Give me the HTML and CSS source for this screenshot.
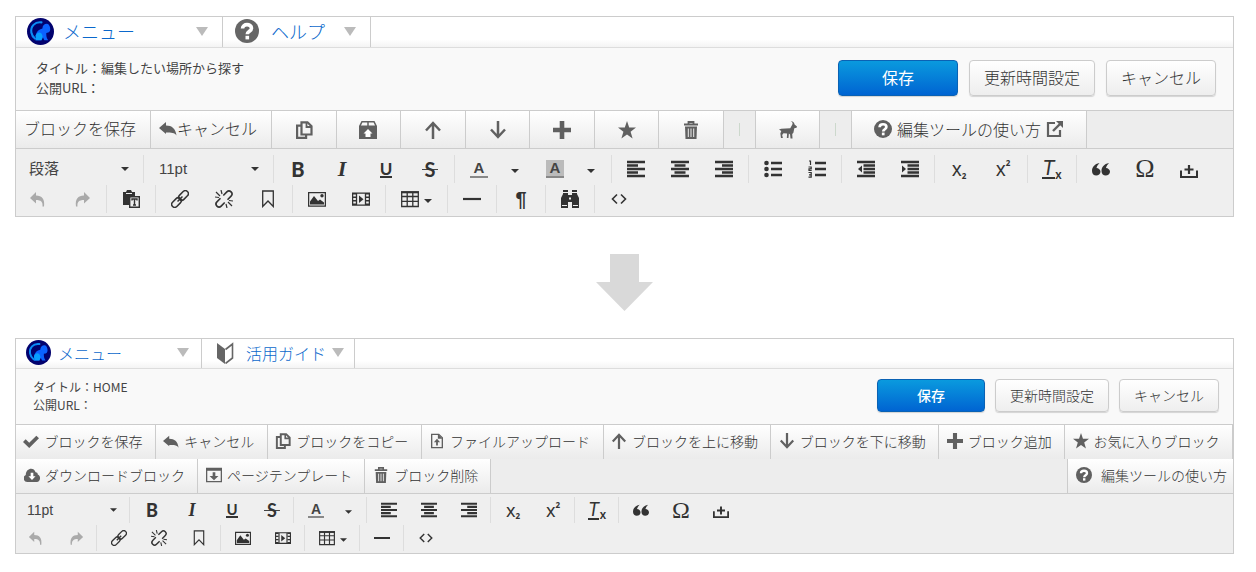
FILE: index.html
```html
<!DOCTYPE html>
<html lang="ja">
<head>
    <meta charset="UTF-8">
    <meta name="viewport" content="width=device-width, initial-scale=1.0">
    <title>編集ツール</title>
    <link rel="stylesheet" href="styles.css">
</head>
<body>

    <!-- icon sprite -->
    <svg class="sprite">
        <symbol id="logo" viewBox="0 0 28 28">
            <circle cx="14" cy="14" r="14" fill="#02026e"/>
            <path d="M15 4.500C8 3.500 3.500 9 4.500 15c.5 3 2 5 4 6.500" fill="none" stroke="#0a8cf5" stroke-width="2.200" stroke-linecap="round"/>
            <path d="M9 23c1-1 0-3 0-5 1-4 3-6 7-7 0-3 2-5 4.500-5 2 0 3 2 3.500 4 .5 3-.5 4.500-2 5l-2 .5c0 3 0 5 2 7.500h-4l-1.500-3-1.500 3z" fill="#0b62ff"/>
            <path d="M8.500 23c2-1 0-3 .5-5 1-3 4-4 6-2 2 3 1 5 0 7z" fill="#08a0ff"/>
        </symbol>
        <symbol id="help" viewBox="0 0 24 24">
            <circle cx="12" cy="12" r="12" fill="currentColor"/>
            <path d="M7.500 9.500C7.500 4.300 16.500 4.500 16.500 9.300c0 3-4.200 3-4.200 6" fill="none" stroke="#fff" stroke-width="3.600"/>
            <rect x="10.500" y="16.800" width="3.600" height="3.600" fill="#fff"/>
        </symbol>
        <symbol id="book" viewBox="0 0 18 22">
            <path d="M1 1l8 6v15l-8-6z" fill="currentColor"/>
            <path d="M9.500 7.500L16.500 2v14L9.500 21.500" fill="none" stroke="currentColor" stroke-width="1.600"/>
        </symbol>
        <symbol id="tri" viewBox="0 0 12 9"><path d="M0 0h12L6 9z" fill="currentColor"/></symbol>
        <symbol id="caret" viewBox="0 0 8 4"><path d="M0 0h8L4 4z" fill="currentColor"/></symbol>

        <symbol id="back" viewBox="0 0 18 18"><path d="M0 9l7-6v3.500c6 0 9.500 3 10.500 10-2-3-5-3-10.500-3V15z" fill="currentColor"/></symbol>
        <symbol id="copy" viewBox="0 0 18 18">
            <path d="M6.500 1.300h6L16.500 5.300v8.200h-10z" fill="none" stroke="currentColor" stroke-width="2.200"/>
            <path d="M11.500 1v5h5" fill="none" stroke="currentColor" stroke-width="1.800"/>
            <path d="M6 4.600H2.100v12.200h9V14" fill="none" stroke="currentColor" stroke-width="2.200"/>
        </symbol>
        <symbol id="box" viewBox="0 0 18 18">
            <path d="M3 .7h12l2.300 4.600H.7zM9 .7v4.600" fill="none" stroke="currentColor" stroke-width="1.500"/>
            <path d="M0 5.300h18V18H0z" fill="currentColor"/>
            <path d="M9 8l4.500 4.500h-2V16h-5v-3.500h-2z" fill="#fff"/>
        </symbol>
        <symbol id="up" viewBox="0 0 18 18"><path d="M9 18V2M2 9.500L9 2l7 7.500" fill="none" stroke="currentColor" stroke-width="2.500"/></symbol>
        <symbol id="down" viewBox="0 0 18 18"><path d="M9 0v16M2 8.500L9 16l7-7.500" fill="none" stroke="currentColor" stroke-width="2.500"/></symbol>
        <symbol id="plus" viewBox="0 0 18 18"><path d="M6.700 0h4.600v6.700H18v4.600h-6.700V18H6.700v-6.700H0V6.700h6.700z" fill="currentColor"/></symbol>
        <symbol id="star" viewBox="0 0 18 18"><path d="M9 0l2.200 6.600H18l-5.400 4.200 2 6.700L9 13.500l-5.600 4 2-6.700L0 6.600h6.800z" fill="currentColor"/></symbol>
        <symbol id="trash" viewBox="0 0 18 18">
            <path d="M2 3.500h14M6.500 3V1h5v2" fill="none" stroke="currentColor" stroke-width="1.800"/>
            <path d="M3 5.500h12l-.5 12.500h-11z" fill="currentColor"/>
            <path d="M6.300 7.500v8.500M9 7.500v8.500M11.700 7.500v8.500" stroke="#eee" stroke-width="1"/>
        </symbol>
        <symbol id="goat" viewBox="0 0 20 20">
            <path d="M0 9.500l2.500-1 10-.5 2-3.500c1-1.500 1-3-1.500-4.500 3 .3 4 2 4.300 4L20 6l-.5 1.500-2.500.5-1 5-1.300 1.500.3 5h-2.200l-.5-4.500-1.300-1L10.500 19H8.700L9 14l-4-.5-1.500 2 .8 3.500H2.200L1.500 14 2.500 11z" fill="currentColor"/>
        </symbol>
        <symbol id="external" viewBox="0 0 18 18">
            <path d="M9 3H2v13h12v-6" fill="none" stroke="currentColor" stroke-width="2.200"/>
            <path d="M7 11l8-8" stroke="currentColor" stroke-width="2.400"/>
            <path d="M10 1h7v7z" fill="currentColor"/>
        </symbol>
        <symbol id="check" viewBox="0 0 18 18"><path d="M0 10l3-3 4 4 8-8 3 3L7 17z" fill="currentColor"/></symbol>
        <symbol id="file-up" viewBox="0 0 18 18">
            <path d="M3 1.500h8L15 5.500v11H3z" fill="none" stroke="currentColor" stroke-width="1.500"/>
            <path d="M10 1v5.500h5z" fill="currentColor"/>
            <path d="M9 6.500l3.500 4H10V14H8v-3.500H5.500z" fill="currentColor"/>
        </symbol>
        <symbol id="cloud" viewBox="0 0 18 18">
            <path d="M4 17a4.200 4.200 0 0 1-2-8C2 1.500 11-.5 13 6c1.500 0 2.500 1 2.500 2.500C19.500 10 18.500 17 14.500 17z" fill="currentColor"/>
            <path d="M7.500 6.500h3v4H13l-4 4-4-4h2.500z" fill="#fff"/>
        </symbol>
        <symbol id="template" viewBox="0 0 18 18">
            <path d="M.7 1.500h16.600v15H.7z" fill="none" stroke="currentColor" stroke-width="1.500"/>
            <path d="M1 3h16" stroke="currentColor" stroke-width="2.500"/>
            <path d="M7.500 6h3v4H14l-5 5-5-5h3.500z" fill="currentColor"/>
        </symbol>

        <symbol id="left" viewBox="0 0 18 18"><path d="M0 2h18M0 5.500h11M0 9h18M0 12.500h11M0 16h18" stroke="currentColor" stroke-width="2.300"/></symbol>
        <symbol id="center" viewBox="0 0 18 18"><path d="M0 2h18M3.500 5.500h11M0 9h18M3.500 12.500h11M0 16h18" stroke="currentColor" stroke-width="2.300"/></symbol>
        <symbol id="right" viewBox="0 0 18 18"><path d="M0 2h18M7 5.500h11M0 9h18M7 12.500h11M0 16h18" stroke="currentColor" stroke-width="2.300"/></symbol>
        <symbol id="bullets" viewBox="0 0 18 18">
            <path d="M7 3h11M7 9h11M7 15h11" stroke="currentColor" stroke-width="2.300"/>
            <circle cx="2.500" cy="3" r="2.300" fill="currentColor"/><circle cx="2.500" cy="9" r="2.300" fill="currentColor"/><circle cx="2.500" cy="15" r="2.300" fill="currentColor"/>
        </symbol>
        <symbol id="numbers" viewBox="0 0 18 18">
            <path d="M7 3h11M7 9h11M7 15h11" stroke="currentColor" stroke-width="2.300"/>
            <path d="M1 1h1.500v4M.5 7h2.700v1.800H1v1.700h2.700M.5 12.500h2.700v4.700H.5M1 14.800h2" fill="none" stroke="currentColor" stroke-width="1.200"/>
        </symbol>
        <symbol id="outdent" viewBox="0 0 18 18">
            <path d="M0 2h18M6.500 5.500H18M6.500 9H18M6.500 12.500H18M0 16h18" stroke="currentColor" stroke-width="2.300"/>
            <path d="M5 5.500v7L1 9z" fill="currentColor"/>
        </symbol>
        <symbol id="indent" viewBox="0 0 18 18">
            <path d="M0 2h18M6.500 5.500H18M6.500 9H18M6.500 12.500H18M0 16h18" stroke="currentColor" stroke-width="2.300"/>
            <path d="M1 5.500v7L5 9z" fill="currentColor"/>
        </symbol>
        <symbol id="quote" viewBox="0 0 18 18">
            <path d="M7.500 3C2.500 4 0 7 0 11c0 3 2 4.500 4.200 4.500S8.500 14 8.500 11.800 6.500 8.200 4.500 8C5 6 6 4.500 7.500 3zM17 3c-5 1-7.500 4-7.500 8 0 3 2 4.500 4.200 4.500S18 14 18 11.800s-2-3.600-4-3.800c.5-2 1.500-3.500 3-5z" fill="currentColor"/>
        </symbol>
        <symbol id="insert" viewBox="0 0 18 18"><path d="M1 10.500V17h16v-6.500" fill="none" stroke="currentColor" stroke-width="2"/><path d="M9 5v9M4.500 9.500h9" stroke="currentColor" stroke-width="2.200"/></symbol>
        <symbol id="undo" viewBox="0 0 18 18"><path d="M1 8l6-6v3.500c6 0 9 3.500 8 11h-1.500C14 12 12 10 7 10v3.500z" fill="currentColor"/></symbol>
        <symbol id="redo" viewBox="0 0 18 18"><path d="M17 8l-6-6v3.500c-6 0-9 3.500-8 11h1.500C4 12 6 10 11 10v3.500z" fill="currentColor"/></symbol>
        <symbol id="paste" viewBox="0 0 18 18">
            <path d="M1 2h3l1-2h4l1 2h3v4H7v9H1z" fill="currentColor"/>
            <path d="M4 3.500h6" stroke="#eee" stroke-width="1"/>
            <path d="M7.700 6.700h9.600v10.600H7.700z" fill="#efefef" stroke="currentColor" stroke-width="1.400"/>
            <path d="M10 10.500V9h5v1.500M12.500 9v6M11 15h3" fill="none" stroke="currentColor" stroke-width="1.400"/>
        </symbol>
        <symbol id="link" viewBox="0 0 18 18">
            <g transform="rotate(-45 9 9)" fill="none" stroke="currentColor" stroke-width="1.500">
                <rect x="-1.500" y="6" width="11" height="6" rx="3"/><rect x="8.500" y="6" width="11" height="6" rx="3"/><path d="M5.500 9h7"/>
            </g>
        </symbol>
        <symbol id="unlink" viewBox="0 0 18 18">
            <g transform="rotate(-45 9 9)" fill="none" stroke="currentColor" stroke-width="1.600">
                <path d="M7 6H2a3 3 0 0 0 0 6h5M11 6h5a3 3 0 0 1 0 6h-5"/>
            </g>
            <path d="M6 0l1 4M1 2l4 4M0 7l4 .5M12 18l-1-4M17 16l-4-4M18 11l-4-.5" stroke="currentColor" stroke-width="1.200"/>
        </symbol>
        <symbol id="bookmark" viewBox="0 0 18 18"><path d="M3.700 1h10.600v15.500L9 11l-5.300 5.500z" fill="none" stroke="currentColor" stroke-width="1.300"/></symbol>
        <symbol id="image" viewBox="0 0 18 18">
            <path d="M.6 2.600h16.800v13.600H.6z" fill="none" stroke="currentColor" stroke-width="1.300"/>
            <path d="M2 14.500v-3L6 6l4 5 2-1.500 4 3v2z" fill="currentColor"/><circle cx="14" cy="5.800" r="1.700" fill="currentColor"/>
        </symbol>
        <symbol id="video" viewBox="0 0 18 18">
            <path d="M.6 3.100h16.800v12H.6zM4.500 3v12M13.500 3v12" fill="none" stroke="currentColor" stroke-width="1.300"/>
            <path d="M2.500 3v12M15.500 3v12" stroke="currentColor" stroke-width="3" stroke-dasharray="1.500 2"/>
            <path d="M7 5.500v7.500l4.500-3.700z" fill="currentColor"/>
        </symbol>
        <symbol id="table" viewBox="0 0 18 18"><path d="M.7 2h16.600v14.500H.7zM1 6.500h16M1 11.300h16M6.200 2v14M11.800 2v14" fill="none" stroke="currentColor" stroke-width="1.300"/><path d="M0 2.300h18" stroke="currentColor" stroke-width="2"/></symbol>
        <symbol id="line" viewBox="0 0 18 18"><path d="M0 9h18" stroke="currentColor" stroke-width="2.200"/></symbol>
        <symbol id="find" viewBox="0 0 18 18">
            <path d="M2 0h5v5h4V0h5v4l2 4v10h-7v-6H7v6H0V8l2-4z" fill="currentColor"/>
            <path d="M8 7.500h2v2H8z" fill="#efefef"/>
            <path d="M1 15.500h5M12 15.500h5M2 2.500h5M11 2.500h5" stroke="#efefef" stroke-width="1"/>
        </symbol>
        <symbol id="code" viewBox="0 0 18 18"><path d="M7 4.500L2.500 9 7 13.500M11 4.500L15.500 9 11 13.500" fill="none" stroke="currentColor" stroke-width="1.600"/></symbol>
    </svg>

    <section class="editor">
        <nav class="tabs">
            <button class="tab tab-menu"><svg class="logo"><use href="#logo"/></svg>メニュー<svg class="tri"><use href="#tri"/></svg></button>
            <button class="tab tab-help"><svg class="tab-icon"><use href="#help"/></svg>ヘルプ<svg class="tri"><use href="#tri"/></svg></button>
        </nav>
        <header class="info">
            <div class="info-text">
                <div>タイトル：編集したい場所から探す</div>
                <div>公開URL：</div>
            </div>
            <button class="btn btn-save">保存</button>
            <button class="btn">更新時間設定</button>
            <button class="btn">キャンセル</button>
        </header>
        <div class="blocks">
            <button class="block">ブロックを保存</button>
            <button class="block"><svg class="icon"><use href="#back"/></svg>キャンセル</button>
            <div class="block-icons">
                <button class="block" aria-label="コピー"><svg class="icon"><use href="#copy"/></svg></button>
                <button class="block" aria-label="アップロード"><svg class="icon"><use href="#box"/></svg></button>
                <button class="block" aria-label="上に移動"><svg class="icon"><use href="#up"/></svg></button>
                <button class="block" aria-label="下に移動"><svg class="icon"><use href="#down"/></svg></button>
                <button class="block" aria-label="追加"><svg class="icon"><use href="#plus"/></svg></button>
                <button class="block" aria-label="お気に入り"><svg class="icon"><use href="#star"/></svg></button>
                <button class="block" aria-label="削除"><svg class="icon"><use href="#trash"/></svg></button>
            </div>
            <div class="divider"></div>
            <button class="block block-goat" aria-label="やぎ"><svg class="icon"><use href="#goat"/></svg></button>
            <div class="divider"></div>
            <button class="block block-help"><svg class="icon"><use href="#help"/></svg>編集ツールの使い方<svg class="icon"><use href="#external"/></svg></button>
        </div>
        <div class="format">
            <div class="row">
                <div class="group">
                    <label class="pick"><select aria-label="スタイル"><option>段落</option></select><svg class="caret"><use href="#caret"/></svg></label>
                </div>
                <div class="group">
                    <label class="pick"><select aria-label="文字サイズ"><option>11pt</option></select><svg class="caret"><use href="#caret"/></svg></label>
                </div>
                <div class="group">
                    <button class="tool bold">B</button>
                    <button class="tool italic">I</button>
                    <button class="tool underline"><span>U</span></button>
                    <button class="tool strike"><s>S</s></button>
                </div>
                <div class="group">
                    <button class="tool"><span class="color">A</span></button>
                    <button class="tool drop" aria-label="文字色"><svg class="caret"><use href="#caret"/></svg></button>
                    <button class="tool"><span class="color color-back">A</span></button>
                    <button class="tool drop" aria-label="背景色"><svg class="caret"><use href="#caret"/></svg></button>
                </div>
                <div class="group">
                    <button class="tool" aria-label="左揃え"><svg class="icon"><use href="#left"/></svg></button>
                    <button class="tool" aria-label="中央揃え"><svg class="icon"><use href="#center"/></svg></button>
                    <button class="tool" aria-label="右揃え"><svg class="icon"><use href="#right"/></svg></button>
                </div>
                <div class="group">
                    <button class="tool" aria-label="箇条書き"><svg class="icon"><use href="#bullets"/></svg></button>
                    <button class="tool" aria-label="番号付き"><svg class="icon"><use href="#numbers"/></svg></button>
                </div>
                <div class="group">
                    <button class="tool" aria-label="インデント解除"><svg class="icon"><use href="#outdent"/></svg></button>
                    <button class="tool" aria-label="インデント"><svg class="icon"><use href="#indent"/></svg></button>
                </div>
                <div class="group">
                    <button class="tool script">x<small class="low">2</small></button>
                    <button class="tool script">x<small class="high">2</small></button>
                </div>
                <div class="group">
                    <button class="tool clear"><span>T</span><small>x</small></button>
                </div>
                <div class="group">
                    <button class="tool" aria-label="引用"><svg class="icon"><use href="#quote"/></svg></button>
                    <button class="tool omega">Ω</button>
                    <button class="tool" aria-label="挿入"><svg class="icon"><use href="#insert"/></svg></button>
                </div>
            </div>
            <div class="row">
                <div class="group">
                    <button class="tool" aria-label="元に戻す" disabled><svg class="icon"><use href="#undo"/></svg></button>
                    <button class="tool" aria-label="やり直し" disabled><svg class="icon"><use href="#redo"/></svg></button>
                </div>
                <div class="group">
                    <button class="tool" aria-label="貼り付け"><svg class="icon"><use href="#paste"/></svg></button>
                </div>
                <div class="group">
                    <button class="tool" aria-label="リンク"><svg class="icon"><use href="#link"/></svg></button>
                    <button class="tool" aria-label="リンク解除"><svg class="icon"><use href="#unlink"/></svg></button>
                    <button class="tool" aria-label="アンカー"><svg class="icon"><use href="#bookmark"/></svg></button>
                </div>
                <div class="group">
                    <button class="tool" aria-label="画像"><svg class="icon"><use href="#image"/></svg></button>
                    <button class="tool" aria-label="動画"><svg class="icon"><use href="#video"/></svg></button>
                </div>
                <div class="group">
                    <button class="tool table-tool" aria-label="表"><svg class="icon"><use href="#table"/></svg><svg class="caret"><use href="#caret"/></svg></button>
                </div>
                <div class="group">
                    <button class="tool" aria-label="水平線"><svg class="icon"><use href="#line"/></svg></button>
                </div>
                <div class="group">
                    <button class="tool pilcrow">¶</button>
                </div>
                <div class="group">
                    <button class="tool" aria-label="検索"><svg class="icon"><use href="#find"/></svg></button>
                </div>
                <div class="group">
                    <button class="tool" aria-label="ソースコード"><svg class="icon"><use href="#code"/></svg></button>
                </div>
            </div>
        </div>
    </section>

    <svg class="arrow" viewBox="0 0 57 57"><path d="M14 0h29v28h14L28.500 57 0 28h14z"/></svg>

    <section class="editor compact">
        <nav class="tabs">
            <button class="tab tab-menu"><svg class="logo"><use href="#logo"/></svg>メニュー<svg class="tri"><use href="#tri"/></svg></button>
            <button class="tab tab-help"><svg class="tab-icon"><use href="#book"/></svg>活用ガイド<svg class="tri"><use href="#tri"/></svg></button>
        </nav>
        <header class="info">
            <div class="info-text">
                <div>タイトル：HOME</div>
                <div>公開URL：</div>
            </div>
            <button class="btn btn-save">保存</button>
            <button class="btn">更新時間設定</button>
            <button class="btn">キャンセル</button>
        </header>
        <div class="blocks blocks-full">
            <button class="block"><svg class="icon"><use href="#check"/></svg>ブロックを保存</button>
            <button class="block"><svg class="icon"><use href="#back"/></svg>キャンセル</button>
            <button class="block"><svg class="icon"><use href="#copy"/></svg>ブロックをコピー</button>
            <button class="block"><svg class="icon"><use href="#file-up"/></svg>ファイルアップロード</button>
            <button class="block"><svg class="icon"><use href="#up"/></svg>ブロックを上に移動</button>
            <button class="block"><svg class="icon"><use href="#down"/></svg>ブロックを下に移動</button>
            <button class="block"><svg class="icon"><use href="#plus"/></svg>ブロック追加</button>
            <button class="block"><svg class="icon"><use href="#star"/></svg>お気に入りブロック</button>
        </div>
        <div class="blocks blocks-rest">
            <button class="block"><svg class="icon"><use href="#cloud"/></svg>ダウンロードブロック</button>
            <button class="block"><svg class="icon"><use href="#template"/></svg>ページテンプレート</button>
            <button class="block"><svg class="icon"><use href="#trash"/></svg>ブロック削除</button>
            <button class="block block-end"><svg class="icon"><use href="#help"/></svg>編集ツールの使い方</button>
        </div>
        <div class="format">
            <div class="row">
                <div class="group">
                    <label class="pick"><select aria-label="文字サイズ"><option>11pt</option></select><svg class="caret"><use href="#caret"/></svg></label>
                </div>
                <div class="group">
                    <button class="tool bold">B</button>
                    <button class="tool italic">I</button>
                    <button class="tool underline"><span>U</span></button>
                    <button class="tool strike"><s>S</s></button>
                </div>
                <div class="group">
                    <button class="tool"><span class="color">A</span></button>
                    <button class="tool drop" aria-label="文字色"><svg class="caret"><use href="#caret"/></svg></button>
                </div>
                <div class="group">
                    <button class="tool" aria-label="左揃え"><svg class="icon"><use href="#left"/></svg></button>
                    <button class="tool" aria-label="中央揃え"><svg class="icon"><use href="#center"/></svg></button>
                    <button class="tool" aria-label="右揃え"><svg class="icon"><use href="#right"/></svg></button>
                </div>
                <div class="group">
                    <button class="tool script">x<small class="low">2</small></button>
                    <button class="tool script">x<small class="high">2</small></button>
                </div>
                <div class="group">
                    <button class="tool clear"><span>T</span><small>x</small></button>
                </div>
                <div class="group">
                    <button class="tool" aria-label="引用"><svg class="icon"><use href="#quote"/></svg></button>
                    <button class="tool omega">Ω</button>
                    <button class="tool" aria-label="挿入"><svg class="icon"><use href="#insert"/></svg></button>
                </div>
            </div>
            <div class="row">
                <div class="group">
                    <button class="tool" aria-label="元に戻す" disabled><svg class="icon"><use href="#undo"/></svg></button>
                    <button class="tool" aria-label="やり直し" disabled><svg class="icon"><use href="#redo"/></svg></button>
                </div>
                <div class="group">
                    <button class="tool" aria-label="リンク"><svg class="icon"><use href="#link"/></svg></button>
                    <button class="tool" aria-label="リンク解除"><svg class="icon"><use href="#unlink"/></svg></button>
                    <button class="tool" aria-label="アンカー"><svg class="icon"><use href="#bookmark"/></svg></button>
                </div>
                <div class="group">
                    <button class="tool" aria-label="画像"><svg class="icon"><use href="#image"/></svg></button>
                    <button class="tool" aria-label="動画"><svg class="icon"><use href="#video"/></svg></button>
                </div>
                <div class="group">
                    <button class="tool table-tool" aria-label="表"><svg class="icon"><use href="#table"/></svg><svg class="caret"><use href="#caret"/></svg></button>
                </div>
                <div class="group">
                    <button class="tool" aria-label="水平線"><svg class="icon"><use href="#line"/></svg></button>
                </div>
                <div class="group">
                    <button class="tool" aria-label="ソースコード"><svg class="icon"><use href="#code"/></svg></button>
                </div>
            </div>
        </div>
    </section>

</body>
</html>
```

FILE: styles.css
```css
* {
    box-sizing: border-box;
}
body {
    margin: 0;
    padding: 16px 22px 16px 15px;
    background-color: #fff;
    font-family: "Noto Sans CJK JP", sans-serif;
    font-weight: 300;
    color: #333;
}
button, select {
    margin: 0;
    padding: 0;
    border: none;
    background: none;
    font: inherit;
    color: inherit;
    cursor: pointer;
    white-space: nowrap;
}
svg {
    flex: none;
    overflow: visible;
}
.sprite {
    display: none;
}

/* sizes of the large editor, the compact one overrides them */
.editor {
    --tool: 44px;
    --icon: 18px;
    --text: 16px;
    --pad: 2px;
    border: 1px solid #ccc;
}
.compact {
    --tool: 40px;
    --icon: 16px;
    --text: 14px;
    --pad: 1px;
}

/* tabs */
.tabs {
    display: flex;
    height: 31px;
    background: linear-gradient(#fff 75%, #f4f4f4);
    border-bottom: 1px solid #ddd;
}
.tab {
    display: flex;
    align-items: center;
    padding-bottom: 2px;
    border-right: 1px solid #ccc;
    font-size: 18px;
    line-height: 24px;
    color: #0b68cc;
}
.tab-menu {
    width: 207px;
    padding-left: 11px;
    padding-right: 14px;
}
.tab-help {
    width: 148px;
    padding-left: 12px;
    padding-right: 14px;
}
.logo {
    width: 27px;
    height: 27px;
    margin-right: 9px;
}
.tab-icon {
    width: 24px;
    height: 24px;
    margin-right: 12px;
    color: #666;
}
.tri {
    width: 12px;
    height: 9px;
    margin-left: auto;
    color: #bbb;
}
.compact .tabs {
    height: 30px;
}
.compact .tab {
    font-size: 16px;
}
.compact .tab-menu {
    width: 186px;
    padding-left: 10px;
    padding-right: 12px;
}
.compact .tab-help {
    width: 153px;
    padding-left: 14px;
    padding-right: 10px;
}
.compact .logo {
    width: 25px;
    height: 25px;
    margin-right: 7px;
}
.compact .tab-icon {
    width: 18px;
    height: 22px;
}

/* title and main buttons */
.info {
    display: flex;
    align-items: center;
    gap: 11px;
    height: 63px;
    padding: 0 17px 3px 20px;
    background-color: #f9f9f9;
    border-bottom: 1px solid #ccc;
}
.info-text {
    flex: 1;
    font-size: 13px;
    line-height: 20px;
    font-weight: 400;
    color: #444;
}
.btn {
    height: 36px;
    padding: 0 14px 2px;
    border: 1px solid #ccc;
    border-radius: 4px;
    background: linear-gradient(#fff, #eee);
    box-shadow: 0 1px 1px rgba(0, 0, 0, 0.15);
    font-size: var(--text);
    line-height: 24px;
    color: #333;
}
.btn-save {
    width: 120px;
    border-color: #0a62b4;
    background: linear-gradient(#0a9ade, #0064d2);
    font-weight: 400;
    color: #fff;
}
.compact .info {
    gap: 10px;
    height: 56px;
    padding: 0 14px 2px 17px;
}
.compact .info-text {
    font-size: 12px;
    line-height: 18px;
}
.compact .btn {
    height: 33px;
}
.compact .btn-save {
    width: 108px;
    font-weight: 500;
}

/* block toolbar */
.blocks {
    display: flex;
    height: 38px;
    background-color: #ededed;
    border-bottom: 1px solid #ccc;
}
.block {
    display: flex;
    align-items: center;
    justify-content: center;
    padding: 0 14px 3px 8px;
    border-right: 1px solid #ccc;
    background: linear-gradient(#fff, #ebebeb);
    font-size: var(--text);
    line-height: 24px;
    color: #333;
}
.icon {
    width: var(--icon);
    height: var(--icon);
}
.block .icon {
    color: #606060;
}
.block-icons {
    display: grid;
    grid-template-columns: repeat(7, 1fr);
    width: 452px;
}
.block-icons .block {
    padding: 0;
}
.divider {
    display: flex;
    align-items: center;
    justify-content: center;
    width: 32px;
    border-right: 1px solid #ccc;
}
.divider::before {
    content: "";
    width: 1px;
    height: 13px;
    background-color: #ccd8cc;
}
.block-goat {
    width: 64px;
    padding: 0;
}
.block-help {
    width: 235px;
    gap: 5px;
    padding: 0 0 2px;
}
.compact .blocks {
    height: 35px;
}
.compact .block {
    gap: 5px;
    padding: 0 11px 3px 6px;
}
.compact .blocks-full {
    height: 34px;
    border-bottom: none;
}
.blocks-full .block {
    flex: 1 0 auto;
}
.compact .blocks-rest .block {
    padding-right: 12px;
    padding-left: 8px;
}
.compact .blocks-rest .block-end {
    gap: 9px;
    margin-left: auto;
    padding-right: 6px;
    border-left: 1px solid #ccc;
    border-right: none;
}

/* text formatting toolbar */
.format {
    display: flex;
    flex-direction: column;
    gap: 2px;
    padding: 6px 0 3px;
    background-color: #efefef;
}
.row {
    display: flex;
}
.group {
    display: flex;
    padding: 0 var(--pad) 0 2px;
    border-right: 1px solid #ddd;
}
.group:first-child {
    padding-left: 0;
}
.group:last-child {
    border-right: none;
}
.tool {
    display: flex;
    align-items: center;
    justify-content: center;
    width: var(--tool);
    height: 28px;
    font-family: "Liberation Sans", Arial, sans-serif;
    font-size: 20px;
    line-height: 24px;
    font-weight: 400;
}
.tool:disabled {
    color: #aaa;
}
.caret {
    width: 8px;
    height: 4px;
}
.pick {
    display: grid;
    align-items: center;
    width: 125px;
}
.pick select, .pick .caret {
    grid-area: 1 / 1;
}
.pick select {
    appearance: none;
    width: 100%;
    padding-left: 13px;
    font-family: "Liberation Sans", "Noto Sans CJK JP", Arial, sans-serif;
    font-size: 15px;
    line-height: 24px;
    font-weight: 400;
    color: #444;
}
.pick .caret {
    justify-self: end;
    margin-right: 12px;
    pointer-events: none;
}
.bold {
    font-family: Lato, sans-serif;
    font-weight: 900;
}
.italic {
    font-family: "Liberation Serif", serif;
    font-size: 22px;
    font-style: italic;
    font-weight: 700;
}
.underline {
    font-family: Lato, sans-serif;
    font-size: 17px;
    font-weight: 700;
}
.underline span {
    border-bottom: 2px solid #333;
    line-height: 15px;
}
.strike {
    font-family: Lato, sans-serif;
    font-weight: 700;
}
.strike s {
    padding: 0 3px;
    background: linear-gradient(#444, #444) center / 100% 1px no-repeat;
    text-decoration: none;
}
.drop {
    width: 32px;
    padding: 4px 4px 0 0;
}
.color {
    width: 18px;
    height: 18px;
    border-bottom: 2px solid #888;
    font-size: 15px;
    line-height: 16px;
    font-weight: 700;
    color: #444;
}
.color-back {
    background-color: #bbb;
}
.script {
    font-family: "Noto Sans", sans-serif;
    font-size: 19px;
}
.script small {
    font-size: 8px;
    line-height: 8px;
    font-weight: 700;
}
.low {
    align-self: flex-end;
    margin-bottom: 3px;
}
.high {
    align-self: flex-start;
    margin-top: 4px;
}
.clear {
    font-family: Inter, sans-serif;
}
.clear span {
    border-bottom: 2px solid #333;
    font-style: italic;
    line-height: 17px;
}
.clear small {
    align-self: flex-end;
    font-size: 12px;
    line-height: 16px;
    font-weight: 600;
}
.omega {
    font-family: "Liberation Serif", serif;
    font-size: 26px;
}
.pilcrow {
    font-weight: 700;
}
.table-tool {
    gap: 5px;
    width: 57px;
}
.table-tool .caret {
    margin-top: 4px;
}
.compact .format {
    padding: 3px 0 2px;
}
.compact .row .group:first-child {
    padding-right: 0;
}
.compact .tool {
    height: 26px;
    font-size: 18px;
}
.compact .pick {
    width: 113px;
}
.compact .pick select {
    padding-left: 11px;
    font-size: 14px;
}
.compact .caret {
    width: 7px;
    height: 4px;
}
.compact .drop {
    width: 29px;
}
.compact .underline {
    font-size: 15px;
}
.compact .underline span {
    line-height: 13px;
}
.compact .color {
    width: 16px;
    height: 16px;
    font-size: 14px;
    line-height: 14px;
}
.compact .omega {
    font-size: 24px;
}
.compact .table-tool {
    width: 51px;
}

.arrow {
    display: block;
    width: 57px;
    height: 57px;
    margin: 37px auto 27px;
    fill: #d9d9d9;
}
```
